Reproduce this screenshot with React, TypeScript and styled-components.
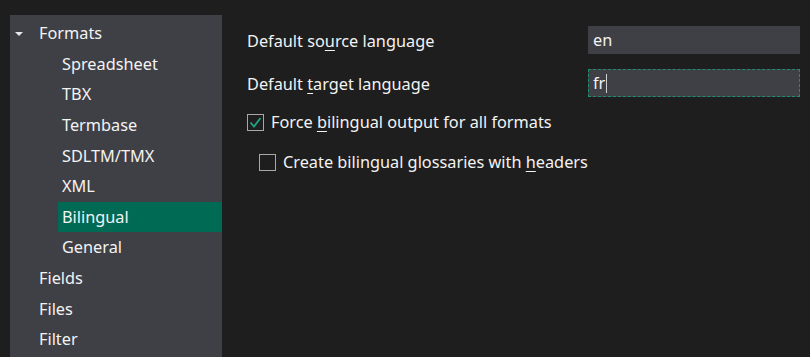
import styled, { createGlobalStyle } from 'styled-components'

const GlobalStyle = createGlobalStyle`
	html, body {
		margin: 0;
		padding: 0;
		background: #1e1e1e;
	}
	body {
		font-family: "Noto Sans", "Open Sans", sans-serif;
		font-size: 16.3px;
		color: #f3f3f3;
	}
`

const Page = styled.div`
	display: flex;
	width: 810px;
	height: 357px;
	padding: 15px 0 0 10px;
	box-sizing: border-box;
	overflow: hidden;
`

const Tree = styled.div`
	width: 212px;
	flex-shrink: 0;
	background: #3f3f46;
	padding-top: 3px;
	display: flex;
	flex-direction: column;
`

const TreeRow = styled.div<{ $depth: number; $selected?: boolean }>`
	height: 30.6px;
	display: flex;
	align-items: center;
	padding-left: ${(p) => (p.$depth ? 4 : 29)}px;
	margin-left: ${(p) => (p.$depth ? 48 : 0)}px;
	background: ${(p) => (p.$selected ? '#006a55' : 'transparent')};
	position: relative;
	white-space: nowrap;
`

const Arrow = styled.span`
	position: absolute;
	left: 5px;
	top: 50%;
	margin-top: -1px;
	width: 0;
	height: 0;
	border-left: 4px solid transparent;
	border-right: 4px solid transparent;
	border-top: 4px solid #e8e8e8;
`

const Content = styled.div`
	flex: 1;
	padding: 11px 10px 0 25px;
	display: flex;
	flex-direction: column;
`

const FieldRow = styled.div`
	display: flex;
	align-items: center;
	justify-content: space-between;
	height: 28px;
	margin-bottom: 15px;
`

const Label = styled.span`
	padding-top: 2px;
	white-space: nowrap;
`

const TextBox = styled.div<{ $focused?: boolean }>`
	width: 212px;
	height: 28px;
	box-sizing: border-box;
	background: #3f3f46;
	display: flex;
	align-items: center;
	padding-left: 4px;
	border: 1px ${(p) => (p.$focused ? 'dashed #1f8c6d' : 'solid #3f3f46')};
`

const Caret = styled.span`
	display: inline-block;
	width: 1px;
	height: 19px;
	background: #cfcfcf;
	margin-left: 1px;
`

const CheckRow = styled.label<{ $indent?: number }>`
	display: flex;
	align-items: center;
	gap: 7px;
	height: 24px;
	margin-left: ${(p) => p.$indent || 0}px;
	margin-bottom: 16px;
	white-space: nowrap;
	&:first-of-type {
		margin-top: -2px;
	}
`

const Box = styled.span`
	width: 17px;
	height: 17px;
	flex-shrink: 0;
	box-sizing: border-box;
	border: 1px solid #a8a8a8;
	background: #1e1e1e;
	display: flex;
	align-items: center;
	justify-content: center;
`

const Ul = styled.span`
	text-decoration: underline;
	text-underline-offset: 3px;
`

const App = () => {
	return (
		<>
			<GlobalStyle />
			<Page>
				<Tree>
					<TreeRow $depth={0}>
						<Arrow />
						Formats
					</TreeRow>
					<TreeRow $depth={1}>Spreadsheet</TreeRow>
					<TreeRow $depth={1}>TBX</TreeRow>
					<TreeRow $depth={1}>Termbase</TreeRow>
					<TreeRow $depth={1}>SDLTM/TMX</TreeRow>
					<TreeRow $depth={1}>XML</TreeRow>
					<TreeRow $depth={1} $selected>
						Bilingual
					</TreeRow>
					<TreeRow $depth={1}>General</TreeRow>
					<TreeRow $depth={0}>Fields</TreeRow>
					<TreeRow $depth={0}>Files</TreeRow>
					<TreeRow $depth={0}>Filter</TreeRow>
				</Tree>
				<Content>
					<FieldRow>
						<Label>
							Default so<Ul>u</Ul>rce language
						</Label>
						<TextBox>en</TextBox>
					</FieldRow>
					<FieldRow>
						<Label>
							Default <Ul>t</Ul>arget language
						</Label>
						<TextBox $focused>
							fr
							<Caret />
						</TextBox>
					</FieldRow>
					<CheckRow>
						<Box>
							<svg width="13" height="11" viewBox="0 0 13 11">
								<path
									d="M1.5 5.5 L5 9.5 L11.5 1"
									fill="none"
									stroke="#1fa583"
									strokeWidth="1.8"
								/>
							</svg>
						</Box>
						<span>
							Force <Ul>b</Ul>ilingual output for all formats
						</span>
					</CheckRow>
					<CheckRow $indent={12}>
						<Box />
						<span>
							Create bilingual glossaries with <Ul>h</Ul>eaders
						</span>
					</CheckRow>
				</Content>
			</Page>
		</>
	)
}

export default App
